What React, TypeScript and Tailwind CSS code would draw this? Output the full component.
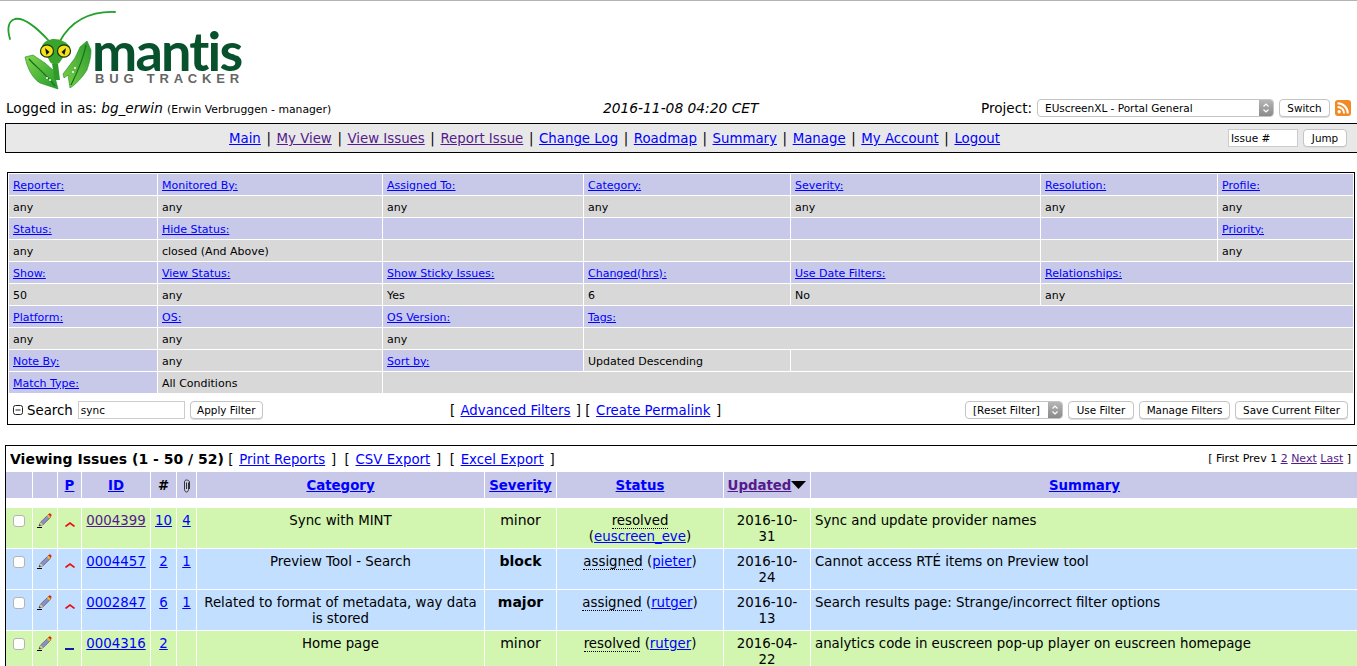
import type { ReactNode } from "react";

const blue = "text-[#0000ff] underline";
const purple = "text-[#551a8b] underline";

const MantisLogo = () => (
  <svg width="92" height="90" viewBox="0 1 92 90" className="shrink-0 overflow-visible">
    <defs>
      <linearGradient id="armL" x1="0" y1="0" x2="1" y2="1">
        <stop offset="0" stopColor="#86d64c" />
        <stop offset="1" stopColor="#1f9a2c" />
      </linearGradient>
      <linearGradient id="armR" x1="1" y1="0" x2="0" y2="1">
        <stop offset="0" stopColor="#2a9c2c" />
        <stop offset="1" stopColor="#7ed048" />
      </linearGradient>
    </defs>
    <path d="M10 39C7 29 8 21 15 19C24 17 38 29 49 41" fill="none" stroke="#22a02a" strokeWidth="1.8" strokeLinecap="round" />
    <path d="M60 41C69 25 84 11 115 12" fill="none" stroke="#22a02a" strokeWidth="1.8" strokeLinecap="round" />
    <path d="M25 57L33 55L45 63L53 70L55 77L58 89L40 83C33 79 27 68 25 57Z" fill="url(#armL)" stroke="#1d8a28" strokeWidth=".6" />
    <path d="M29 59C35 66 45 73 55 86" fill="none" stroke="#136f20" strokeWidth="1.2" />
    <path d="M87 41L91 50C91 60 88 66 87 70C82 78 76 84 70 88L68 75L64 78L63 74L75 58L80 47Z" fill="url(#armR)" stroke="#1d8a28" strokeWidth=".6" />
    <path d="M86 45C83 60 77 73 71 85" fill="none" stroke="#136f20" strokeWidth="1.2" />
    <path d="M52 64L58 64L60 80L55 80Z" fill="#2f9a2a" />
    <path d="M42 46C44 41 50 39 54 39C60 39 67 42 70 47L60 62C58 65 52 65 50 62Z" fill="#39a52d" />
    <ellipse cx="47" cy="51" rx="6.5" ry="6.200" fill="#f5e31a" stroke="#12300f" strokeWidth="1.2" />
    <ellipse cx="64" cy="51" rx="6.5" ry="6.200" fill="#f5e31a" stroke="#12300f" strokeWidth="1.2" />
    <path d="M45 48L49.500 52L46.500 55Z" fill="#111" />
    <path d="M66 48L61.500 52L64.500 55Z" fill="#111" />
    <circle cx="47" cy="78" r="1" fill="#fff" />
    <circle cx="50" cy="80" r="1" fill="#fff" />
    <circle cx="75" cy="68" r="1" fill="#fff" />
    <circle cx="73" cy="72" r="1" fill="#fff" />
  </svg>
);

const Btn = ({ children, className = "" }: { children: ReactNode; className?: string }) => (
  <button className={`h-[18px] rounded-[4px] border border-[#c4c4c4] bg-white text-[10.4px] leading-none text-black shadow-[0_1px_0_#ddd] ${className}`}>
    {children}
  </button>
);

const MacSelect = ({ label, className = "" }: { label: string; className?: string }) => (
  <div className={`flex h-[18px] items-stretch overflow-hidden rounded-[4px] border border-[#c4c4c4] bg-white text-[10.5px] text-black ${className}`}>
    <span className="flex-1 truncate pl-[7px] leading-[16px]">{label}</span>
    <span className="flex w-[14px] flex-col items-center justify-center bg-gradient-to-b from-[#b5b5b5] to-[#8a8a8a]">
      <svg width="8" height="12" viewBox="0 0 8 12" fill="none" stroke="#fff" strokeWidth="1.2">
        <path d="M1.500 4.500L4 2L6.500 4.500M1.500 7.500L4 10L6.500 7.500" />
      </svg>
    </span>
  </div>
);

const Rss = () => (
  <svg width="16" height="16" viewBox="0 0 16 16" className="shrink-0">
    <rect width="16" height="16" rx="3" fill="#f08a24" />
    <circle cx="4.200" cy="11.800" r="1.700" fill="#fff" />
    <path d="M2.600 6.900A6.500 6.500 0 0 1 9.100 13.400" fill="none" stroke="#fff" strokeWidth="2" />
    <path d="M2.600 3.200A10.200 10.200 0 0 1 12.800 13.400" fill="none" stroke="#fff" strokeWidth="2" />
  </svg>
);

const Pencil = () => (
  <svg width="17" height="16" viewBox="0 0 17 16" className="block">
    <path d="M1 15.500H6" stroke="#000" strokeWidth="1" />
    <path d="M3 14L4.500 10.200L12.600 2.400L15 4.900L7 12.800Z" fill="#8d8fc7" stroke="#444" strokeWidth="0.6" />
    <path d="M3 14L4.500 10.200L7 12.800Z" fill="#e8c98f" />
    <path d="M3 14L3.700 12.200L4.900 13.300Z" fill="#000" />
    <path d="M10.800 4.100L12.600 2.400L15 4.900L13.300 6.500Z" fill="#f0b92c" />
    <path d="M12.400 2.600L13.400 1.200C14 .8 15.600 2.200 15.600 3L14.900 4.700Z" fill="#e01f26" />
  </svg>
);

const Check = () => <span className="mt-[3px] ml-[7px] block h-[12px] w-[12px] rounded-[3px] border border-[#b4b4b4] bg-white" />;

const filterRows: { cells: { text?: string; link?: boolean; span?: number }[]; head: boolean }[] = [
  { head: true, cells: ["Reporter:", "Monitored By:", "Assigned To:", "Category:", "Severity:", "Resolution:", "Profile:"].map((text) => ({ text, link: true })) },
  { head: false, cells: ["any", "any", "any", "any", "any", "any", "any"].map((text) => ({ text })) },
  { head: true, cells: [{ text: "Status:", link: true }, { text: "Hide Status:", link: true }, {}, {}, {}, {}, { text: "Priority:", link: true }] },
  { head: false, cells: [{ text: "any" }, { text: "closed (And Above)" }, {}, {}, {}, {}, { text: "any" }] },
  {
    head: true,
    cells: [
      { text: "Show:", link: true },
      { text: "View Status:", link: true },
      { text: "Show Sticky Issues:", link: true },
      { text: "Changed(hrs):", link: true },
      { text: "Use Date Filters:", link: true },
      { text: "Relationships:", link: true, span: 2 },
    ],
  },
  { head: false, cells: [{ text: "50" }, { text: "any" }, { text: "Yes" }, { text: "6" }, { text: "No" }, { text: "any", span: 2 }] },
  {
    head: true,
    cells: [
      { text: "Platform:", link: true },
      { text: "OS:", link: true },
      { text: "OS Version:", link: true },
      { text: "Tags:", link: true, span: 4 },
    ],
  },
  { head: false, cells: [{ text: "any" }, { text: "any" }, { text: "any" }, { span: 4 }] },
];

const FilterCell = ({ text, link, head, span }: { text?: string; link?: boolean; head?: boolean; span?: number }) => (
  <td colSpan={span} className={`h-[21px] px-[4px] pt-[1px] pb-0 text-[11px] leading-[13px] ${head ? "bg-[#c8c8e8]" : "bg-[#d8d8d8]"}`}>
    {link ? <a className={blue}>{text}</a> : text}
  </td>
);

const FilterTable = () => (
  <table className="w-[1346px] table-fixed border-separate border-spacing-[1px]">
    <colgroup>
      <col className="w-[148px]" />
      <col className="w-[224px]" />
      <col className="w-[200px]" />
      <col className="w-[206px]" />
      <col className="w-[249px]" />
      <col className="w-[176px]" />
      <col />
    </colgroup>
    <tbody>
      {filterRows.map((r, i) => (
        <tr key={i}>
          {r.cells.map((c, j) => (
            <FilterCell key={j} {...c} head={r.head} />
          ))}
        </tr>
      ))}
      <tr>
        <FilterCell text="Note By:" link head />
        <FilterCell text="any" />
        <FilterCell text="Sort by:" link head />
        <FilterCell text="Updated Descending" />
        <FilterCell span={3} />
      </tr>
      <tr>
        <FilterCell text="Match Type:" link head />
        <FilterCell text="All Conditions" />
        <FilterCell span={5} />
      </tr>
    </tbody>
  </table>
);

const issues = [
  { bg: "bg-[#d2f5b0]", id: "0004399", idSeen: true, notes: "10", files: "4", pri: "high", cat: "Sync with MINT", sev: "minor", sevBold: false, status: "resolved", who: "euscreen_eve", wrap: true, date: ["2016-10-", "31"], summary: "Sync and update provider names" },
  { bg: "bg-[#c2dfff]", id: "0004457", idSeen: false, notes: "2", files: "1", pri: "high", cat: "Preview Tool - Search", sev: "block", sevBold: true, status: "assigned", who: "pieter", wrap: false, date: ["2016-10-", "24"], summary: "Cannot access RTÉ items on Preview tool" },
  { bg: "bg-[#c2dfff]", id: "0002847", idSeen: false, notes: "6", files: "1", pri: "high", cat: "Related to format of metadata, way data is stored", sev: "major", sevBold: true, status: "assigned", who: "rutger", wrap: false, date: ["2016-10-", "13"], summary: "Search results page: Strange/incorrect filter options" },
  { bg: "bg-[#d2f5b0]", id: "0004316", idSeen: false, notes: "2", files: "", pri: "low", cat: "Home page", sev: "minor", sevBold: false, status: "resolved", who: "rutger", wrap: false, date: ["2016-04-", "22"], summary: "analytics code in euscreen pop-up player on euscreen homepage" },
];

const headers: { label?: string; seen?: boolean; plain?: boolean; clip?: boolean; sort?: boolean }[] = [
  {},
  {},
  { label: "P" },
  { label: "ID" },
  { label: "#", plain: true },
  { clip: true },
  { label: "Category" },
  { label: "Severity" },
  { label: "Status" },
  { label: "Updated", seen: true, sort: true },
  { label: "Summary" },
];

const cell = "pt-[5px] pb-[3px] text-center align-top";

const IssueTable = () => (
  <table className="-ml-px w-[1354px] table-fixed border-separate border-spacing-[1px] text-[13.33px] leading-[16px]">
    <colgroup>
      <col className="w-[26px]" />
      <col className="w-[24px]" />
      <col className="w-[23px]" />
      <col className="w-[68px]" />
      <col className="w-[25px]" />
      <col className="w-[19px]" />
      <col className="w-[287px]" />
      <col className="w-[71px]" />
      <col className="w-[166px]" />
      <col className="w-[86px]" />
      <col />
    </colgroup>
    <tbody>
      <tr>
        {headers.map((h, i) => (
          <td key={i} className="h-[26px] bg-[#c8c8e8] px-0 pt-[2px] pb-0 text-center font-bold">
            {h.clip ? (
              <svg width="9" height="14" viewBox="0 0 9 14" fill="none" stroke="#333" strokeWidth="1" className="mx-auto block">
                <path d="M6.500 3.500V10.500C6.500 12 5.500 13 4.500 13S2.500 12 2.500 10.500V3C2.500 1.800 3.200 1 4.500 1S7.500 1.800 7.500 3V10M4.500 3.500V10" />
              </svg>
            ) : h.plain ? (
              h.label
            ) : h.label ? (
              <span className="inline-flex items-center">
                <a className={h.seen ? purple : blue}>{h.label}</a>
                {h.sort && (
                  <svg width="15" height="8" viewBox="0 0 15 8" className="mb-[2px]">
                    <path d="M0 0H15L7.500 8Z" fill="#000" />
                  </svg>
                )}
              </span>
            ) : null}
          </td>
        ))}
      </tr>
      <tr>
        <td colSpan={11} className="h-[8px] p-0" />
      </tr>
      {issues.map((r) => (
        <tr key={r.id}>
          <td className={`${r.bg} h-[40px] p-0 align-top`}>
            <div className="pt-[4px]">
              <Check />
            </div>
          </td>
          <td className={`${r.bg} p-0 align-top`}>
            <div className="pt-[4px] pl-[3px]">
              <Pencil />
            </div>
          </td>
          <td className={`${r.bg} p-0 align-top`}>
            <div className="flex justify-center pt-[14px]">
              {r.pri === "high" ? (
                <svg width="10" height="5" viewBox="0 0 10 5" fill="none" stroke="#e81010" strokeWidth="1.6">
                  <path d="M.5 4.500L5 1L9.500 4.500" />
                </svg>
              ) : (
                <span className="mt-[3px] block h-[2px] w-[9px] bg-[#1818a8]" />
              )}
            </div>
          </td>
          <td className={`${r.bg} px-0 ${cell}`}>
            <a className={r.idSeen ? purple : blue}>{r.id}</a>
          </td>
          <td className={`${r.bg} px-0 ${cell}`}>
            <a className={blue}>{r.notes}</a>
          </td>
          <td className={`${r.bg} px-0 ${cell}`}>
            <a className={blue}>{r.files}</a>
          </td>
          <td className={`${r.bg} px-[4px] ${cell}`}>{r.cat}</td>
          <td className={`${r.bg} px-0 py-[4px] text-center align-top text-[14px] ${r.sevBold ? "font-bold" : ""}`}>{r.sev}</td>
          <td className={`${r.bg} px-0 ${cell}`}>
            <span className="border-b border-dotted border-black">{r.status}</span>
            {r.wrap ? <br /> : " "}(<a className={blue}>{r.who}</a>)
          </td>
          <td className={`${r.bg} px-0 ${cell}`}>
            {r.date[0]}
            <br />
            {r.date[1]}
          </td>
          <td className={`${r.bg} px-[4px] pt-[5px] pb-[3px] align-top`}>{r.summary}</td>
        </tr>
      ))}
    </tbody>
  </table>
);

const navLinks = [
  ["Main", false],
  ["My View", true],
  ["View Issues", true],
  ["Report Issue", true],
  ["Change Log", false],
  ["Roadmap", false],
  ["Summary", false],
  ["Manage", false],
  ["My Account", false],
  ["Logout", false],
] as const;

export default function App() {
  return (
    <div className="h-[666px] w-[1357px] overflow-hidden border-t border-[#b3b3b3] bg-white font-['DejaVu_Sans',sans-serif] text-black">
      <div className="flex h-[96px]">
        <MantisLogo />
        <div className="flex flex-col items-start pt-[27px]">
          <span className="font-['Lato',sans-serif] text-[54px] leading-[46px] font-bold tracking-[-1.8px] text-[#07522d]">mantis</span>
          <span className="ml-[3px] font-['Liberation_Sans',sans-serif] text-[13px] leading-[10px] font-bold tracking-[4.8px] text-[#666]">BUG TRACKER</span>
        </div>
      </div>

      <div className="flex h-[26px] items-start pt-[2px] text-[13.6px] leading-[18px]">
        <div className="w-[603px] pl-[6px]">
          Logged in as: <i>bg_erwin</i> <span className="text-[10.8px]">(Erwin Verbruggen - manager)</span>
        </div>
        <i className="w-[378px] text-[13.8px]">2016-11-08 04:20 CET</i>
        <span className="w-[56px]">Project:</span>
        <MacSelect label="EUscreenXL - Portal General" className="w-[237px]" />
        <Btn className="ml-[5px] w-[51px]">Switch</Btn>
        <span className="mt-[1px] ml-[5px]">
          <Rss />
        </span>
      </div>

      <div className="ml-[5px] flex h-[30px] w-[1360px] items-center border border-black bg-[#e8e8e8] text-[13.33px]">
        <div className="w-[223px]" />
        <div className="w-[999px] pt-[2px] whitespace-pre">
          {navLinks.map(([name, seen], i) => (
            <span key={name}>
              {i > 0 && <span className="mx-[5.6px]">|</span>}
              <a className={seen ? purple : blue}>{name}</a>
            </span>
          ))}
        </div>
        <input defaultValue="Issue #" className="h-[18px] w-[70px] border border-[#ccc] bg-white pl-[2px] text-[10.5px]" />
        <Btn className="ml-[5px] w-[44px]">Jump</Btn>
      </div>

      <div className="mt-[19px] ml-[7px] h-[253px] w-[1348px] border border-black">
        <FilterTable />
        <div className="flex h-[30px] items-center pt-[2px] pr-[6px] text-[13.33px]">
          <div className="flex w-[442px] items-center pl-[5px]">
            <svg width="10" height="10" viewBox="0 0 10 10" fill="none" stroke="#222" strokeWidth="1" className="mr-[4px]">
              <rect x=".5" y=".5" width="9" height="9" rx="2" />
              <path d="M2.500 5H7.500" />
            </svg>
            <span className="pt-[1px]">Search</span>
            <input defaultValue="sync" className="ml-[5px] h-[18px] w-[107px] border border-[#ccc] bg-white pl-[2px] text-[10.5px]" />
            <Btn className="ml-[5px] w-[73px]">Apply Filter</Btn>
          </div>
          <div className="pt-[2px] whitespace-pre">
            [ <a className={`${blue} mx-[1px]`}>Advanced Filters</a> ] [ <a className={`${blue} mx-[1.5px]`}>Create Permalink</a> ]
          </div>
          <div className="ml-auto flex items-center gap-[5px]">
            <MacSelect label="[Reset Filter]" className="w-[98px]" />
            <Btn className="w-[66px]">Use Filter</Btn>
            <Btn className="w-[91px]">Manage Filters</Btn>
            <Btn className="w-[113px]">Save Current Filter</Btn>
          </div>
        </div>
      </div>

      <div className="mt-[20px] ml-[5px] w-[1360px] border border-black">
        <div className="flex h-[25px] items-center pr-[13px] pl-[4px] text-[13.33px]">
          <div className="mt-[2px] whitespace-pre">
            <b className="text-[14px]">Viewing Issues (1 - 50 / 52)</b> [ <a className={`${blue} mx-[1.5px]`}>Print Reports</a> ]  [ <a className={`${blue} mx-[1.5px]`}>CSV Export</a> ]  [ <a className={`${blue} mx-[1.5px]`}>Excel Export</a> ]
          </div>
          <div className="mt-[2px] ml-auto text-[11px] whitespace-pre">
            [ First Prev 1 <a className={purple}>2</a> <a className={purple}>Next</a> <a className={purple}>Last</a> ]
          </div>
        </div>
        <IssueTable />
      </div>
    </div>
  );
}
